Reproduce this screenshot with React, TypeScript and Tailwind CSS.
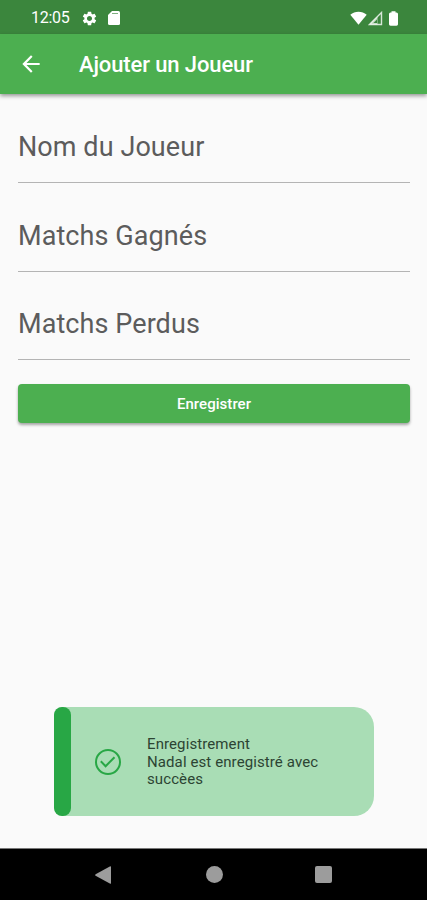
import React from "react";

const fields = [
  { label: "Nom du Joueur", box: "h-[89px]" },
  { label: "Matchs Gagnés", box: "h-[89px]" },
  { label: "Matchs Perdus", box: "h-[88px]" },
];

function StatusBar() {
  return (
    <div className="flex h-[34px] shrink-0 items-center bg-[#3b863d] pl-[31px] pr-[29px] pt-[2px] text-white">
      <span className="text-[16px] leading-none tracking-[-0.3px]">12:05</span>
      <svg className="ml-[11.5px] h-[17px] w-[17px]" viewBox="0 0 24 24" fill="currentColor">
        <path d="M19.14 12.94c.04-.3.06-.61.06-.94 0-.32-.02-.64-.07-.94l2.03-1.58c.18-.14.23-.41.12-.61l-1.92-3.32c-.12-.22-.37-.29-.59-.22l-2.39.96c-.5-.38-1.03-.7-1.62-.94l-.36-2.54c-.04-.24-.24-.41-.48-.41h-3.84c-.24 0-.43.17-.47.41l-.36 2.54c-.59.24-1.13.57-1.62.94l-2.39-.96c-.22-.08-.47 0-.59.22L2.74 8.87c-.12.21-.08.47.12.61l2.03 1.58c-.05.3-.09.63-.09.94s.02.64.07.94l-2.03 1.58c-.18.14-.23.41-.12.61l1.92 3.32c.12.22.37.29.59.22l2.39-.96c.5.38 1.03.7 1.62.94l.36 2.54c.05.24.24.41.48.41h3.84c.24 0 .44-.17.47-.41l.36-2.54c.59-.24 1.13-.56 1.62-.94l2.39.96c.22.08.47 0 .59-.22l1.92-3.32c.12-.22.07-.47-.12-.61l-2.01-1.58zM12 15.6c-1.98 0-3.6-1.62-3.6-3.6s1.62-3.6 3.6-3.6 3.6 1.62 3.6 3.6-1.62 3.6-3.6 3.6z" />
      </svg>
      <svg className="ml-[10px] h-[14px] w-[12px]" viewBox="0 0 12 14">
        <path fill="currentColor" d="M4 0h6.5Q12 0 12 1.5v11Q12 14 10.5 14h-9Q0 14 0 12.5V4z" />
        <path stroke="#3b863d" strokeOpacity=".65" strokeWidth="1" d="M4 2.5h6" />
      </svg>
      <div className="ml-auto flex items-center">
        <svg className="h-[14px] w-[17px]" viewBox="0 0 17 14">
          <path fill="currentColor" d="M.3 3.8C4.8-.2 12.2-.2 16.7 3.8L8.5 13.7z" />
        </svg>
        <svg className="ml-[1px] h-[15px] w-[15px]" viewBox="0 0 15 15" fill="none">
          <path stroke="currentColor" strokeOpacity=".8" strokeWidth="1.4" d="M1.5 13.5L13.5 1.5v12z" />
          <path fill="currentColor" fillOpacity=".65" d="M1.5 13.5L9.5 5.5v8z" />
          <path fill="#3b863d" d="M5.5 12L9 8.5V12z" />
        </svg>
        <svg className="ml-[6px] h-[15px] w-[9px]" viewBox="0 0 9 15">
          <path fill="currentColor" d="M2.5 1.5V.3h4v1.2h1Q9 1.5 9 3v10.3Q9 14.7 7.5 14.7h-6Q0 14.7 0 13.3V3Q0 1.5 1.5 1.5z" />
        </svg>
      </div>
    </div>
  );
}

function AppBar() {
  return (
    <header className="relative flex h-[60px] shrink-0 items-center bg-[#4caf50] pl-[18px] text-white shadow-[0_2px_4px_rgba(0,0,0,0.4)]">
      <svg className="h-[26px] w-[26px]" viewBox="0 0 24 24" fill="currentColor">
        <path d="M20 11H7.83l5.59-5.59L12 4l-8 8 8 8 1.41-1.41L7.83 13H20v-2z" />
      </svg>
      <h1 className="ml-[35px] pt-[2px] text-[22px] font-medium leading-none tracking-[-0.12px]">Ajouter un Joueur</h1>
    </header>
  );
}

function Toast() {
  return (
    <div className="mx-[54px] mb-[32px] mt-auto flex h-[109px] w-[320px] items-center rounded-l-[9px] rounded-r-[20px] bg-[#a9ddb5]">
      <div className="h-full w-[17px] rounded-[8px] bg-[#28a745]" />
      <svg className="ml-[23px] h-[28px] w-[28px]" viewBox="0 0 28 28" fill="none" stroke="#28a745" strokeWidth="2">
        <circle cx="14" cy="14" r="12" />
        <path d="M6.8 13.2l4.8 5L20.5 9.2" />
      </svg>
      <p className="ml-[25px] pt-[2px] text-[15px] leading-[17.5px] tracking-[0.1px] text-[#2c4433]">
        Enregistrement
        <br />
        Nadal est enregistré avec
        <br />
        succèes
      </p>
    </div>
  );
}

function NavBar() {
  return (
    <nav className="flex h-[52px] shrink-0 items-center border-t border-[#777] bg-black pl-[95px] text-[#9c9c9c]">
      <svg className="h-[18px] w-[16px]" viewBox="0 0 16 18" fill="currentColor">
        <path d="M.6 8.2L14.8.4q1.2-.5 1.2.7v15.8q0 1.2-1.2.7L.6 9.8q-1-.8 0-1.6z" />
      </svg>
      <div className="ml-[94.5px] h-[17px] w-[17px] rounded-full bg-current" />
      <div className="ml-[92.5px] h-[17px] w-[17px] rounded-[2px] bg-current" />
    </nav>
  );
}

export default function App() {
  return (
    <div className="flex h-[900px] w-[427px] flex-col overflow-hidden bg-[#fafafa] font-['Roboto',sans-serif]">
      <StatusBar />
      <AppBar />
      <main className="flex min-h-0 flex-1 flex-col">
        <form className="pl-[18px] pr-[17px]">
          {fields.map((f) => (
            <div key={f.label} className={`${f.box} flex items-end border-b border-[#b4b4b4] pb-[21px]`}>
              <label className="text-[27px] leading-[27px] tracking-[0.08px] text-[#5c5c5c]">{f.label}</label>
            </div>
          ))}
          <button
            type="button"
            className="mt-[24px] flex h-[39px] w-full items-center justify-center rounded-[4px] bg-[#4caf50] pt-[2px] text-[15px] font-medium tracking-[0.05px] text-white shadow-[0_2px_3px_rgba(0,0,0,0.35)]"
          >
            Enregistrer
          </button>
        </form>
        <Toast />
      </main>
      <NavBar />
    </div>
  );
}
